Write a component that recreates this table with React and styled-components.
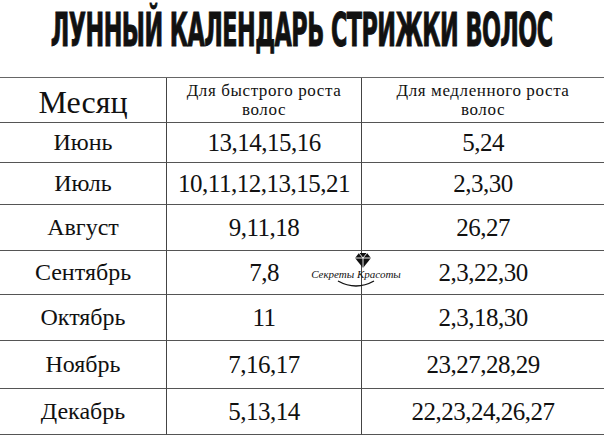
import styled, { createGlobalStyle } from "styled-components";

const GlobalStyle = createGlobalStyle`
  html, body {
    margin: 0;
    padding: 0;
    background: #fff;
  }
  body {
    font-family: "Liberation Serif", "Times New Roman", serif;
    color: #111;
  }
`;

const rows = [
  { month: "Июнь", fast: "13,14,15,16", slow: "5,24" },
  { month: "Июль", fast: "10,11,12,13,15,21", slow: "2,3,30" },
  { month: "Август", fast: "9,11,18", slow: "26,27" },
  { month: "Сентябрь", fast: "7,8", slow: "2,3,22,30" },
  { month: "Октябрь", fast: "11", slow: "2,3,18,30" },
  { month: "Ноябрь", fast: "7,16,17", slow: "23,27,28,29" },
  { month: "Декабрь", fast: "5,13,14", slow: "22,23,24,26,27" },
];

const App = () => {
  return (
    <Page>
      <GlobalStyle />
      <TitleBar>
        <Title>Лунный календарь стрижки волос</Title>
      </TitleBar>
      <Table>
        <HeadCell $first>
          <MonthHead>Месяц</MonthHead>
        </HeadCell>
        <HeadCell>
          <HeadLabel>
            <span>Для быстрого роста</span>
            <span>волос</span>
          </HeadLabel>
        </HeadCell>
        <HeadCell>
          <HeadLabel>
            <span>Для медленного роста</span>
            <span>волос</span>
          </HeadLabel>
        </HeadCell>
        {rows.map((r) => (
          <Row key={r.month}>
            <Cell $first>
              <Month>{r.month}</Month>
            </Cell>
            <Cell>
              <Days>{r.fast}</Days>
            </Cell>
            <Cell>
              <Days>{r.slow}</Days>
            </Cell>
          </Row>
        ))}
      </Table>
      <Logo>
        <svg width="20" height="17" viewBox="0 0 20 17">
          <path d="M2 6 L6 1 L14 1 L18 6 L10 16 Z" fill="#111" />
          <path d="M2 6 L18 6 M6 1 L10 6 L14 1 M10 6 L10 16" stroke="#fff" strokeWidth="0.9" fill="none" />
        </svg>
        <LogoText>Секреты Красоты</LogoText>
        <svg width="44" height="8" viewBox="0 0 44 8">
          <path d="M4 1 Q22 11 40 1" stroke="#111" strokeWidth="1.4" fill="none" />
        </svg>
      </Logo>
    </Page>
  );
};

export default App;

const Page = styled.div`
  position: relative;
  width: 604px;
  height: 436px;
  overflow: hidden;
  background: #fff;
`;

const TitleBar = styled.div`
  height: 77px;
  display: flex;
  justify-content: center;
  align-items: flex-start;
  padding-top: 6px;
  box-sizing: border-box;
`;

const Title = styled.h1`
  margin: 0;
  font-family: "DejaVu Sans Condensed", "DejaVu Sans", sans-serif;
  font-stretch: condensed;
  font-weight: 700;
  font-size: 46px;
  line-height: 48px;
  text-transform: uppercase;
  letter-spacing: -1px;
  color: #111;
  white-space: nowrap;
  transform: scaleX(0.54);
  transform-origin: center;
  -webkit-text-stroke: 1px #111;
`;

const Table = styled.div`
  display: grid;
  grid-template-columns: 166px 195px 243px;
  grid-template-rows: 45px 40px 42px 46px 44px 46px 48px 46px;
  border-top: 1.5px solid #666;
`;

const Row = styled.div`
  display: contents;
`;

const HeadCell = styled.div`
  display: flex;
  align-items: center;
  justify-content: center;
  border-bottom: 1px solid #555;
  border-left: ${(p) => (p.$first ? "none" : "1px solid #444")};
  overflow: hidden;
`;

const Cell = styled(HeadCell)``;

const MonthHead = styled.span`
  font-size: 32px;
  line-height: 1;
  padding-top: 3px;
`;

const HeadLabel = styled.div`
  display: flex;
  flex-direction: column;
  align-items: center;
  font-size: 17px;
  letter-spacing: 0.6px;
  span {
    line-height: 19px;
    display: block;
  }
`;

const Month = styled.span`
  font-size: 24px;
`;

const Days = styled.span`
  font-size: 25px;
  letter-spacing: -0.5px;
`;

const Logo = styled.div`
  position: absolute;
  left: 306px;
  top: 252px;
  width: 100px;
  display: flex;
  flex-direction: column;
  align-items: center;
  pointer-events: none;
  svg:first-child {
    margin-left: 14px;
  }
`;

const LogoText = styled.span`
  font-size: 11px;
  font-style: italic;
  line-height: 12px;
  margin-top: -1px;
  white-space: nowrap;
`;
